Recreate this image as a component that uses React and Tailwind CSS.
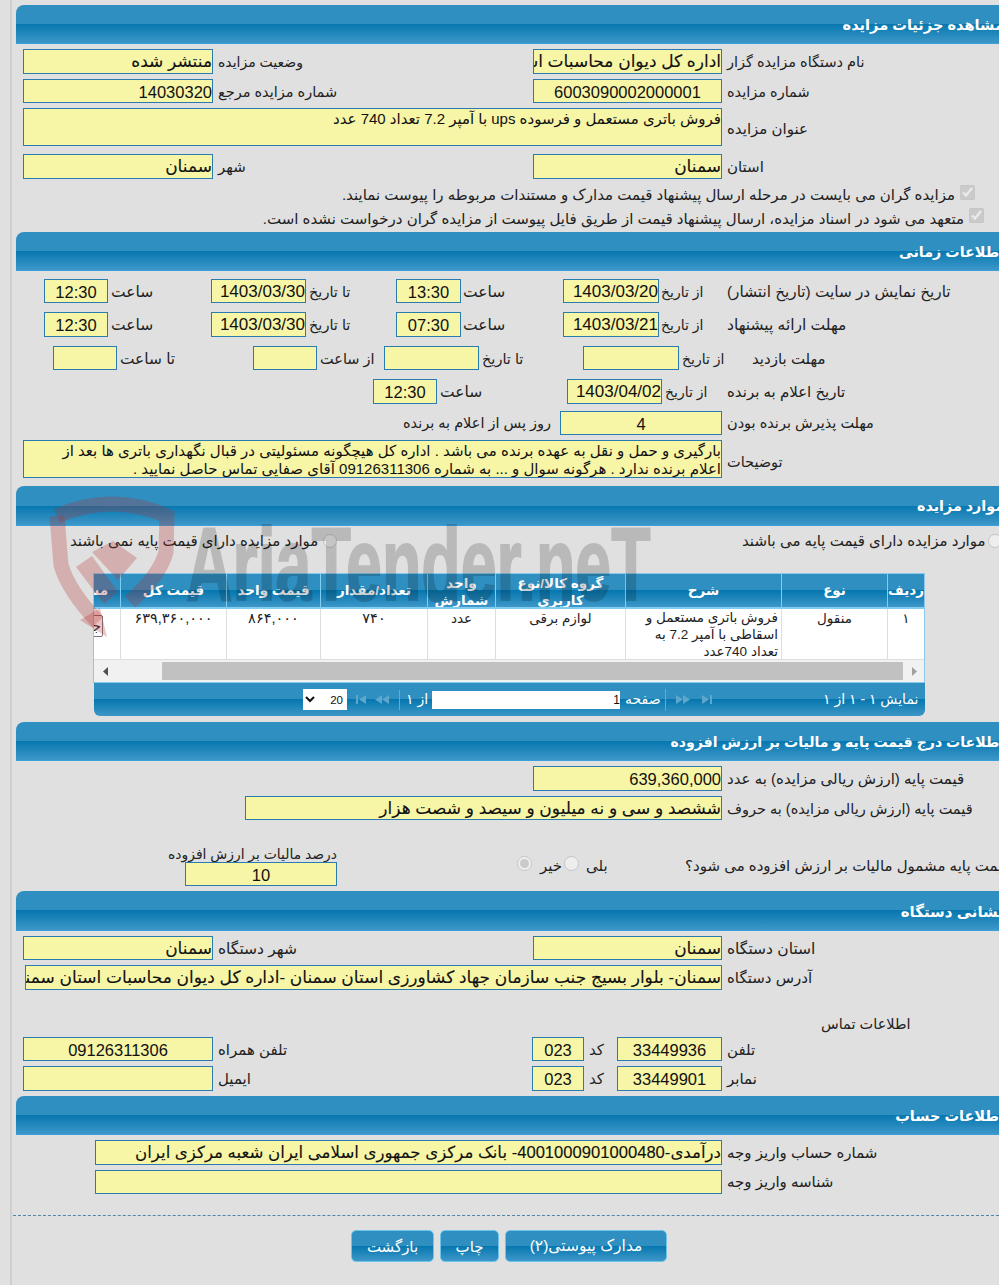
import React from "react";

const F = "[font-family:'Liberation_Sans','DejaVu_Sans',sans-serif]";
const GRAD = "bg-[linear-gradient(#2f8fc0_0%,#2f8fc0_50%,#0677af_50%,#3d97c8_100%)]";

const Box = ({ className = "", center, ar, children }) => (
  <div
    dir="rtl"
    className={`shrink-0 border border-[#2a7bb0] bg-[#f7f5a6] leading-[24px] text-[#111] overflow-hidden whitespace-nowrap ${ar ? "text-[17px] [-webkit-text-stroke:0.12px_#111]" : "text-[16.5px]"} ${center ? "text-center" : "text-right"} ${className}`}
  >
    {children}
  </div>
);

const L = ({ className = "", children }) => (
  <span dir="rtl" className={`block shrink-0 self-center text-left text-[15px] leading-[18px] text-[#222] whitespace-nowrap ${className}`}>
    {children}
  </span>
);

const Row = ({ className = "", children }) => <div className={`flex ${className}`}>{children}</div>;

const Head = ({ className = "", children }) => (
  <div dir="rtl" className={`${GRAD} w-[992px] h-[39px] rounded-tl-[8px] border-b border-[#3aa0dc] flex items-center pr-[4px] pt-[3px] text-white font-bold text-[14.3px] whitespace-nowrap ${className}`}>
    {children}
  </div>
);

const Th = ({ children, className = "" }) => (
  <div dir="rtl" className={`flex items-center justify-center text-center border-r border-[#7fcdf0] text-white font-bold text-[13.5px] leading-[17px] overflow-hidden ${className}`}>
    {children}
  </div>
);
const Td = ({ children, className = "" }) => (
  <div dir="rtl" className={`border-r border-[#dedede] text-center text-[13.5px] leading-[17px] text-[#222] pt-[1px] overflow-hidden ${className}`}>
    {children}
  </div>
);

const Skip = ({ flip }) => (
  <svg width="13" height="9" viewBox="0 0 13 9" className={flip ? "-scale-x-100" : ""}>
    <path d="M1 0h2v9H1zM11 0v9L4 4.5z" fill="#5ea6cb" />
  </svg>
);
const Dbl = ({ flip }) => (
  <svg width="15" height="9" viewBox="0 0 15 9" className={flip ? "-scale-x-100" : ""}>
    <path d="M7 0v9L0 4.5zM14 0v9L7 4.5z" fill="#5ea6cb" />
  </svg>
);

const Btn = ({ className = "", children }) => (
  <button dir="rtl" className={`${GRAD} h-[32px] rounded-[5px] border border-[#6cc4ea] text-white text-[15px] leading-none shrink-0 ${className}`}>
    {children}
  </button>
);

function Watermark() {
  return (
    <div className="absolute left-0 top-0 w-[999px] h-[700px] pointer-events-none overflow-hidden z-10">
      <svg className="absolute left-0 top-0" width="200" height="660" viewBox="0 0 200 660">
        <g fill="none" stroke="#b42d2d" strokeOpacity="0.27" strokeWidth="15">
          <path d="M57 516 Q112 492 167 516 L166 552 Q160 575 130 602" />
          <path d="M57 516 L61 565 Q68 590 98 622" />
        </g>
        <g fill="#b42d2d" fillOpacity="0.27">
          <path d="M76 567 L92 556 L118 592 L104 604 Z" />
          <path d="M92 552 L113 541 L137 558 L118 580 Z" />
          <path d="M80 620 L100 608 L107 637 Z" />
        </g>
      </svg>
      <div dir="ltr" className="absolute left-[186px] top-[504px] origin-left scale-x-[0.62] text-[#000] opacity-[0.17] text-[104px] leading-[120px] font-bold [-webkit-text-stroke:2px_#000] whitespace-nowrap [font-family:'Liberation_Sans',sans-serif]">
        AriaTender.neT
      </div>
    </div>
  );
}

export default function App() {
  return (
    <div dir="ltr" className={`relative w-[999px] h-[1285px] overflow-hidden bg-[#e0e0e0] pl-[10px] ${F}`}>
      <Watermark />
      <div className="h-full border-l-2 border-[#cfcfcf] pl-[4px] pt-[5px]">
        <Head className="!text-[14.6px]">مشاهده جزئیات مزایده</Head>

        <Row className="mt-[5px] h-[25px]">
          <Box ar className="ml-[7px] w-[190px]">منتشر شده</Box>
          <L className="ml-[5px] w-[315px] !text-[14px]">وضعیت مزایده</L>
          <Box ar className="w-[189px]">اداره کل دیوان محاسبات استان سمنان</Box>
          <L className="ml-[5px] !text-[14.5px]">نام دستگاه مزایده گزار</L>
        </Row>
        <Row className="mt-[5px] h-[24px] [&>span]:pt-[1px]">
          <Box className="ml-[7px] w-[190px]">14030320</Box>
          <L className="ml-[5px] w-[315px] !text-[14.5px]">شماره مزایده مرجع</L>
          <Box center className="w-[189px]">6003090002000001</Box>
          <L className="ml-[5px] !text-[14.5px]">شماره مزایده</L>
        </Row>
        <Row className="mt-[5px] h-[38px]">
          <Box className="ml-[7px] w-[699px] !text-[15px] !leading-[20px]">فروش باتری مستعمل و فرسوده ups با آمپر 7.2 تعداد 740 عدد</Box>
          <L className="ml-[5px] pt-[4px]">عنوان مزایده</L>
        </Row>
        <Row className="mt-[8px] h-[25px]">
          <Box ar className="ml-[7px] w-[190px]">سمنان</Box>
          <L className="ml-[5px] w-[315px]">شهر</L>
          <Box ar className="w-[189px]">سمنان</Box>
          <L className="ml-[5px]">استان</L>
        </Row>
        <div dir="rtl" className="mt-[6px] h-[15px] flex items-center w-[959px] gap-[5px]">
          <input type="checkbox" disabled checked readOnly className="m-0 w-[15px] h-[15px] shrink-0" />
          <span className="mt-[5px] text-[15px] text-[#222] whitespace-nowrap">مزایده گران می بایست در مرحله ارسال پیشنهاد قیمت مدارک و مستندات مربوطه را پیوست نمایند.</span>
        </div>
        <div dir="rtl" className="mt-[8px] h-[15px] flex items-center w-[968px] gap-[5px]">
          <input type="checkbox" disabled checked readOnly className="m-0 w-[15px] h-[15px] shrink-0" />
          <span className="mt-[7px] text-[15px] text-[#222] whitespace-nowrap">متعهد می شود در اسناد مزایده، ارسال پیشنهاد قیمت از طریق فایل پیوست از مزایده گران درخواست نشده است.</span>
        </div>

        <Head className="mt-[9px]">اطلاعات زمانی</Head>

        <Row className="mt-[8px] h-[24px] [&>span]:pt-[1px]">
          <Box center className="ml-[28px] w-[64px]">12:30</Box>
          <L className="ml-[3px] w-[100px] !text-[15.5px]">ساعت</L>
          <Box className="w-[95px] !text-[17px]">1403/03/30</Box>
          <L className="ml-[3px] w-[87px] !text-[14.5px]">تا تاریخ</L>
          <Box center className="w-[65px]">13:30</Box>
          <L className="ml-[2px] w-[100px] !text-[15.5px]">ساعت</L>
          <Box className="w-[96px] !text-[17px]">1403/03/20</Box>
          <L className="ml-[2px] w-[66px] !text-[14px]">از تاریخ</L>
          <L className="!text-[15.3px]">تاریخ نمایش در سایت (تاریخ انتشار)</L>
        </Row>
        <Row className="mt-[9px] h-[25px]">
          <Box center className="ml-[28px] w-[64px]">12:30</Box>
          <L className="ml-[3px] w-[100px] !text-[15.5px]">ساعت</L>
          <Box className="w-[95px] !text-[17px]">1403/03/30</Box>
          <L className="ml-[3px] w-[87px] !text-[14.5px]">تا تاریخ</L>
          <Box center className="w-[65px]">07:30</Box>
          <L className="ml-[2px] w-[100px] !text-[15.5px]">ساعت</L>
          <Box className="w-[96px] !text-[17px]">1403/03/21</Box>
          <L className="ml-[2px] w-[66px] !text-[14px]">از تاریخ</L>
          <L className="!text-[15.5px]">مهلت ارائه پیشنهاد</L>
        </Row>
        <Row className="mt-[9px] h-[24px] [&>span]:pt-[1px]">
          <Box className="ml-[37px] w-[64px]" />
          <L className="ml-[3px] w-[133px] !text-[15.4px]">تا ساعت</L>
          <Box className="w-[64px]" />
          <L className="ml-[3px] w-[64px] !text-[14.5px]">از ساعت</L>
          <Box className="w-[95px]" />
          <L className="ml-[3px] w-[101px] !text-[14.5px]">تا تاریخ</L>
          <Box className="w-[96px]" />
          <L className="ml-[3px] w-[70px] !text-[14px]">از تاریخ</L>
          <L>مهلت بازدید</L>
        </Row>
        <Row className="mt-[9px] h-[25px]">
          <Box center className="ml-[357px] w-[64px]">12:30</Box>
          <L className="ml-[3px] w-[127px] !text-[15.5px]">ساعت</L>
          <Box className="w-[95px] !text-[17px]">1403/04/02</Box>
          <L className="ml-[3px] w-[62px] !text-[14px]">از تاریخ</L>
          <L>تاریخ اعلام به برنده</L>
        </Row>
        <Row className="mt-[7px] h-[24px]">
          <L className="ml-[387px] w-[157px] !text-[14.5px]">روز پس از اعلام به برنده</L>
          <Box center className="w-[162px]">4</Box>
          <L className="ml-[5px] !text-[14.5px]">مهلت پذیرش برنده بودن</L>
        </Row>
        <Row className="mt-[5px] h-[38px]">
          <Box className="ml-[7px] w-[699px] !text-[15px] !leading-[18px] pt-[1px]">
            بارگیری و حمل و نقل به عهده برنده می باشد . اداره کل هیچگونه مسئولیتی در قبال نگهداری باتری ها بعد از
            <br />
            اعلام برنده ندارد . هرگونه سوال و ... به شماره 09126311306 آقای صفایی تماس حاصل نمایید .
          </Box>
          <L className="ml-[5px] pt-[6px] !text-[14.5px]">توضیحات</L>
        </Row>

        <Head className="mt-[8px] !h-[40px]">موارد مزایده</Head>

        <Row className="mt-[7px] h-[15px] items-center">
          <L className="ml-[54px] w-[253px]">موارد مزایده دارای قیمت پایه نمی باشند</L>
          <input type="radio" disabled className="m-0 w-[14px] h-[14px] shrink-0" />
          <L className="ml-[405px] w-[246px]">موارد مزایده دارای قیمت پایه می باشند</L>
          <input type="radio" disabled className="m-0 w-[14px] h-[14px] shrink-0" />
        </Row>

        <div className="ml-[77px] mt-[25px] w-[832px] border border-[#8cc8ea]">
          <div className={`grid grid-cols-[27px_106px_94px_107px_68px_130px_156px_106px_36px] h-[35px] border-b-2 border-[#7fcdf0] ${GRAD}`}>
            <Th className="!justify-start pr-[12px] whitespace-nowrap">مشخصات</Th>
            <Th>قیمت کل</Th>
            <Th>قیمت واحد</Th>
            <Th>تعداد/مقدار</Th>
            <Th className="pt-[2px]">واحد شمارش</Th>
            <Th className="px-[12px] pt-[2px]">گروه کالا/نوع کاربری</Th>
            <Th>شرح</Th>
            <Th>نوع</Th>
            <Th className="!border-r-0">ردیف</Th>
          </div>
          <div className="grid grid-cols-[27px_106px_94px_107px_68px_130px_156px_106px_36px] h-[51px] bg-white border-b border-[#dedede]">
            <Td className="relative">
              <span className="absolute right-[17px] top-[6px] w-[50px] h-[22px] border border-[#777] rounded-[2px] text-right pr-[1px] text-[14px] leading-[20px]">جزئیات</span>
            </Td>
            <Td className="!text-[14.5px]">۶۳۹,۳۶۰,۰۰۰</Td>
            <Td className="!text-[14.5px]">۸۶۴,۰۰۰</Td>
            <Td className="!text-[14.5px]">۷۴۰</Td>
            <Td>عدد</Td>
            <Td>لوازم برقی</Td>
            <Td className="!text-right pr-[3px] !pt-0">فروش باتری مستعمل و اسقاطی با آمپر 7.2 به تعداد 740عدد</Td>
            <Td>منقول</Td>
            <Td className="!border-r-0">۱</Td>
          </div>
          <div className="flex h-[22px] bg-[#f1f1f1] items-center">
            <svg width="68" height="9" viewBox="0 0 68 9" className="shrink-0">
              <path d="M14 0v9L9 4.5z" fill="#505050" />
            </svg>
            <div className="h-[18px] w-[741px] bg-[#c1c1c1] shrink-0" />
            <svg width="20" height="9" viewBox="0 0 20 9" className="shrink-0">
              <path d="M9 0v9l5-4.5z" fill="#a0a0a0" />
            </svg>
          </div>
        </div>

        <div className={`ml-[78px] w-[831px] h-[33px] rounded-b-[6px] flex items-center text-white ${GRAD}`}>
          <select dir="rtl" defaultValue="20" className="ml-[209px] w-[44px] h-[21px] bg-white text-[#111] text-[11.5px] border-0 outline-none shrink-0">
            <option value="20">20</option>
          </select>
          <div className="ml-[8px] flex items-center gap-[7px]">
            <Skip />
            <Dbl />
          </div>
          <div className="ml-[9px] w-[1px] h-[20px] bg-[#6aa9cc]" />
          <span dir="rtl" className="ml-[6px] text-[14px] text-left w-[26px] whitespace-nowrap">از ۱</span>
          <div className="w-[188px] h-[18px] bg-white text-right text-[#111] text-[12px] leading-[18px]">1</div>
          <span dir="rtl" className="ml-[5px] w-[40px] text-[14px] whitespace-nowrap text-left">صفحه</span>
          <div className="w-[1px] h-[22px] bg-[#6aa9cc]" />
          <div className="ml-[9px] flex items-center gap-[10px]">
            <Dbl flip />
            <Skip flip />
          </div>
          <span dir="rtl" className="ml-[110px] text-[14px] whitespace-nowrap">نمایش ۱ - ۱ از ۱</span>
        </div>

        <Head className="mt-[6px] !text-[14.1px]">اطلاعات درج قیمت پایه و مالیات بر ارزش افزوده</Head>

        <Row className="mt-[5px] h-[25px]">
          <Box className="ml-[517px] w-[189px]">639,360,000</Box>
          <L className="ml-[5px]">قیمت پایه (ارزش ریالی مزایده) به عدد</L>
        </Row>
        <Row className="mt-[5px] h-[24px] [&>span]:pt-[1px]">
          <Box ar className="ml-[229px] w-[477px] ">ششصد و سی و نه میلیون و سیصد و شصت هزار</Box>
          <L className="ml-[5px] !text-[14.5px]">قیمت پایه (ارزش ریالی مزایده) به حروف</L>
        </Row>
        <Row className="mt-[25px] h-[41px]">
          <div className="ml-[153px] w-[168px] shrink-0 flex flex-col items-end">
            <L className="!self-end !text-[13.9px] !leading-[17px] pt-[1px] !h-[17px]">درصد مالیات بر ارزش افزوده</L>
            <Box center className="w-[152px] h-[24px]">10</Box>
          </div>
          <Row className="h-[41px] items-start">
            <input type="radio" disabled defaultChecked className="ml-[180px] mt-[11px] w-[15px] h-[15px] shrink-0" />
            <L className="ml-[8px] w-[24px] !self-start mt-[12px]">خیر</L>
            <input type="radio" disabled className="mt-[11px] w-[15px] h-[15px] shrink-0" />
            <L className="ml-[7px] w-[99px] !self-start mt-[12px]">بلی</L>
            <L className="!self-start mt-[12px]">قیمت پایه مشمول مالیات بر ارزش افزوده می شود؟</L>
          </Row>
        </Row>

        <Head className="mt-[5px] !h-[40px] !text-[15px]">نشانی دستگاه</Head>

        <Row className="mt-[5px] h-[24px] [&>span]:pt-[1px]">
          <Box ar className="ml-[7px] w-[190px]">سمنان</Box>
          <L className="ml-[5px] w-[315px] !text-[15.5px]">شهر دستگاه</L>
          <Box ar className="w-[189px]">سمنان</Box>
          <L className="ml-[5px] !text-[15.5px]">استان دستگاه</L>
        </Row>
        <Row className="mt-[5px] h-[25px] [&>span]:pt-[1px]">
          <Box ar className="ml-[9px] w-[697px]">سمنان- بلوار بسیج جنب سازمان جهاد کشاورزی استان سمنان -اداره کل دیوان محاسبات استان سمنان</Box>
          <L className="ml-[5px]">آدرس دستگاه</L>
        </Row>
        <Row className="mt-[25px] h-[18px]">
          <L className="ml-[805px] !text-[14.5px]">اطلاعات تماس</L>
        </Row>
        <Row className="mt-[4px] h-[24px] [&>span]:pt-[1px]">
          <Box center className="ml-[7px] w-[190px]">09126311306</Box>
          <L className="ml-[5px] w-[314px]">تلفن همراه</L>
          <Box center className="w-[52px]">023</Box>
          <L className="ml-[5px] w-[28px]">کد</L>
          <Box center className="w-[105px]">33449936</Box>
          <L className="ml-[5px]">تلفن</L>
        </Row>
        <Row className="mt-[5px] h-[25px]">
          <Box className="ml-[7px] w-[190px]" />
          <L className="ml-[5px] w-[314px]">ایمیل</L>
          <Box center className="w-[52px]">023</Box>
          <L className="ml-[5px] w-[28px]">کد</L>
          <Box center className="w-[105px]">33449901</Box>
          <L className="ml-[5px]">نمابر</L>
        </Row>

        <Head className="mt-[5px] !text-[14.5px]">اطلاعات حساب</Head>

        <Row className="mt-[5px] h-[25px]">
          <Box ar className="ml-[79px] w-[627px] !text-[16.6px]">درآمدی-4001000901000480- بانک مرکزی جمهوری اسلامی ایران شعبه مرکزی ایران</Box>
          <L className="ml-[5px]">شماره حساب واریز وجه</L>
        </Row>
        <Row className="mt-[5px] h-[24px]">
          <Box className="ml-[79px] w-[627px]" />
          <L className="ml-[5px]">شناسه واریز وجه</L>
        </Row>

        <div className="mt-[21px] -ml-[3px] border-t border-dashed border-[#4f87a8]" />

        <Row className="mt-[14px]">
          <Btn className="ml-[335px] w-[83px]">بازگشت</Btn>
          <Btn className="ml-[6px] w-[59px]">چاپ</Btn>
          <Btn className="ml-[6px] w-[162px] !text-[15.5px]">مدارک پیوستی(۲)</Btn>
        </Row>
      </div>
    </div>
  );
}
